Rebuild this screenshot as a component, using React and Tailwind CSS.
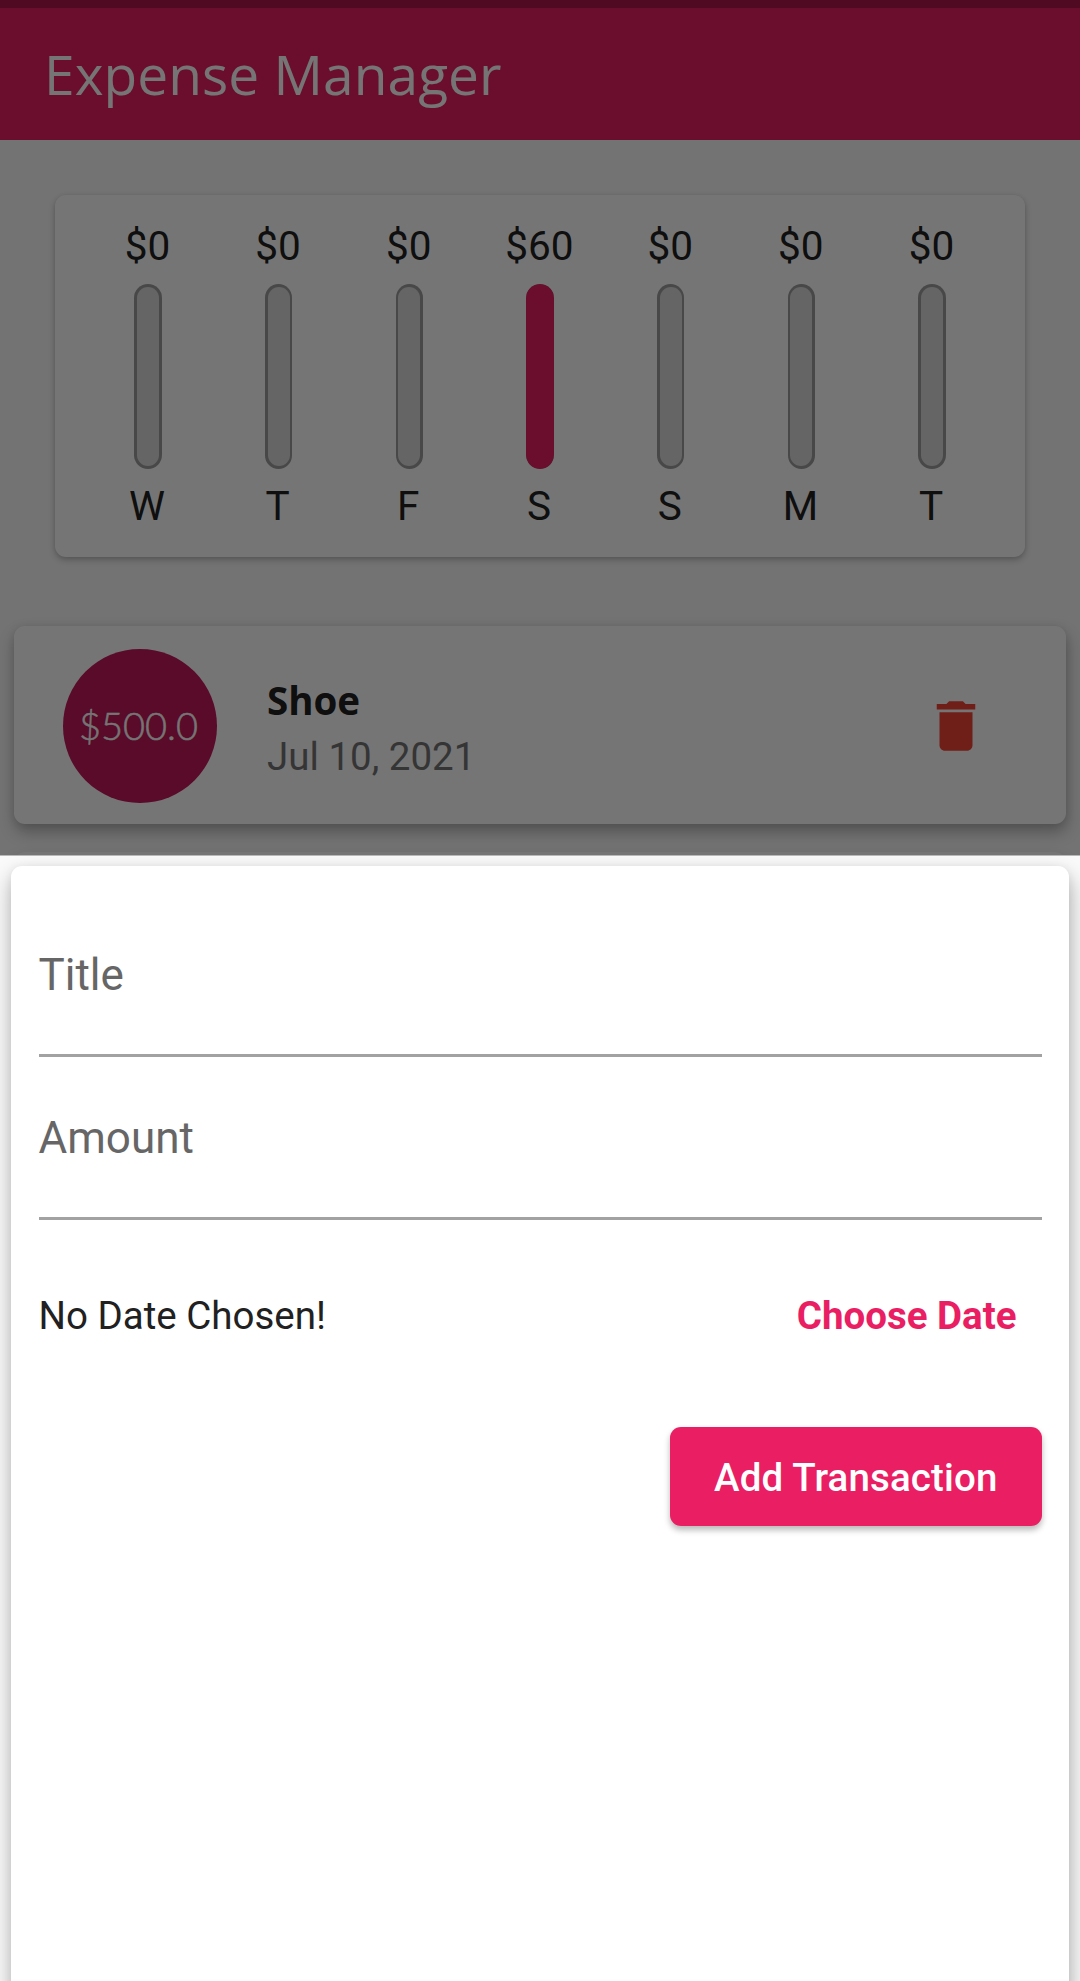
import React from "react";

const week = [
  { day: "W", amount: "$0", fill: 0 },
  { day: "T", amount: "$0", fill: 0 },
  { day: "F", amount: "$0", fill: 0 },
  { day: "S", amount: "$60", fill: 1 },
  { day: "S", amount: "$0", fill: 0 },
  { day: "M", amount: "$0", fill: 0 },
  { day: "T", amount: "$0", fill: 0 },
];

function ChartBar({ day, amount, fill }) {
  return (
    <div className="flex w-[130.7px] flex-col items-center">
      <span className="h-[48px] pr-[1px] text-[40.5px] leading-[48px] text-[#212121]">{amount}</span>
      <div className="mt-[14px] flex h-[184.5px] w-[27.5px] flex-col justify-end overflow-hidden rounded-full bg-[#9e9e9e]">
        {fill > 0 ? (
          <div className="w-full rounded-full bg-[#e91e63]" style={{ height: `${fill * 100}%` }} />
        ) : (
          <div className="m-[2.75px] flex-1 rounded-full bg-[#dcdcdc]" />
        )}
      </div>
      <span className="mt-[13.5px] h-[48px] pr-[2px] text-[40.5px] leading-[48px] text-[#212121]">{day}</span>
    </div>
  );
}

function TransactionCard() {
  return (
    <div className="mx-[14px] mt-[69px] flex h-[198px] shrink-0 items-center rounded-[11px] bg-white pl-[49px] pr-[77px] pt-[2px] shadow-[1px_8px_16px_rgba(0,0,0,0.28),0_1px_10px_rgba(0,0,0,0.09)]">
      <div className="flex size-[154px] items-center justify-center rounded-full bg-[#c2185b] pb-[2px] pr-[3px] font-['Lato'] text-[38px] font-light text-white [-webkit-text-stroke:0.5px_white]">
        $500.0
      </div>
      <div className="ml-[50px] flex flex-1 flex-col pt-[4px]">
        <span className="h-[57px] font-['Open_Sans'] text-[38.5px] font-bold leading-[52px] text-[#212121]">Shoe</span>
        <span className="text-[38.5px] leading-[52px] text-[#757575]">Jul 10, 2021</span>
      </div>
      <svg viewBox="0 0 24 24" className="size-[66px] fill-[#f44336]">
        <path d="M6 19c0 1.1.9 2 2 2h8c1.1 0 2-.9 2-2V7H6v12zM19 4h-3.5l-1-1h-5l-1 1H5v2h14V4z" />
      </svg>
    </div>
  );
}

function Field({ label }) {
  return (
    <div className="flex h-[162px] items-start border-b-[3px] border-[#a2a2a2]">
      <span className="mt-[54px] text-[44px] leading-[52px] text-[#666666]">{label}</span>
    </div>
  );
}

export default function App() {
  return (
    <div className="flex h-[1981px] w-[1080px] flex-col overflow-hidden bg-[#fafafa] font-['Roboto',sans-serif]">
      <div className="relative flex h-[855px] shrink-0 flex-col overflow-hidden">
        <div className="h-[8px] shrink-0 bg-[#ae164a]" />
        <header className="flex h-[132px] shrink-0 items-center bg-[#e91e63] pl-[44px]">
          <h1 className="font-['Open_Sans'] text-[55px] tracking-[0.07px] text-white">Expense Manager</h1>
        </header>
        <section className="mx-[55px] mt-[55px] flex h-[362px] shrink-0 justify-center rounded-[11px] bg-white pt-[27px] shadow-[0_3px_6px_rgba(0,0,0,0.24),0_0_4px_rgba(0,0,0,0.06)]">
          {week.map((entry, i) => (
            <ChartBar key={i} {...entry} />
          ))}
        </section>
        <TransactionCard />
        <div className="mx-[14px] mt-[28px] h-[198px] shrink-0 rounded-[11px] bg-white shadow-[0_8px_16px_rgba(0,0,0,0.24)]" />
        <div className="absolute inset-0 bg-black/54" />
      </div>
      <main className="h-[1126px] shrink-0 overflow-hidden border-t border-[#b8b8b8] px-[11px] pt-[10px]">
        <form className="flex h-[1300px] flex-col rounded-[11px] bg-white px-[27.5px] pt-[29px] shadow-[1px_10px_22px_rgba(0,0,0,0.32),0_1px_8px_rgba(0,0,0,0.05)]">
          <Field label="Title" />
          <div className="pt-px">
            <Field label="Amount" />
          </div>
          <div className="mt-[68px] flex h-[56px] items-center justify-between pr-[25px] text-[38.5px]">
            <span className="text-[#212121]">No Date Chosen!</span>
            <button type="button" className="font-bold text-[#e91e63]">Choose Date</button>
          </div>
          <button
            type="button"
            className="mt-[83px] h-[99px] w-[371.5px] self-end rounded-[11px] bg-[#e91e63] pt-[2px] text-[38.5px] font-medium tracking-[0.14px] text-white shadow-[0_4px_6px_rgba(0,0,0,0.28)]"
          >
            Add Transaction
          </button>
        </form>
      </main>
    </div>
  );
}
